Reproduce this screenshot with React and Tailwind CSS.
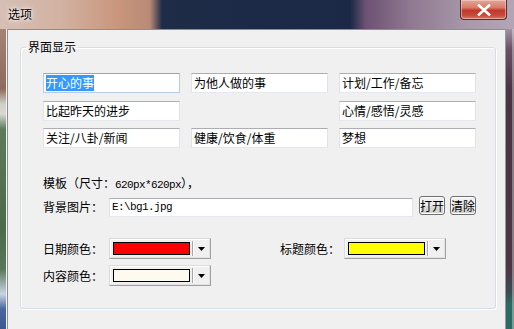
import React from "react";

function Field({ children, focused }) {
  return (
    <div
      className={`h-[20px] w-[137px] bg-white border flex items-center pl-[2px] leading-[16px] ${
        focused
          ? "border-[#b8cde3] border-t-[#8ea6c2]"
          : "border-[#e2e3ea] border-t-[#abadb3] border-b-[#e3e9ef]"
      }`}
    >
      {children}
    </div>
  );
}

function ColorCombo({ color }) {
  return (
    <div className="h-[21px] w-[102px] flex items-center border border-[#dcdcdc] border-b-[#a0a0a0] border-r-[#a0a0a0] bg-[#f0f0f0] shadow-[inset_-1px_-1px_0_#e3e3e3,inset_1px_1px_0_#ffffff]">
      <div className={`ml-[3px] h-[13px] w-[77px] border border-black ${color}`} />
      <div className="ml-[2px] h-[15px] w-[1px] bg-[#a8a8a8] shadow-[1px_0_0_#ffffff]" />
      <svg width="14" height="13" viewBox="0 0 14 13" className="ml-[1px]">
        <path d="M4 5 H11 L7.5 9 Z" fill="#000" />
      </svg>
    </div>
  );
}

function WinButton({ children }) {
  return (
    <button className="h-[19px] w-[26px] rounded-[3px] border border-[#707070] bg-[linear-gradient(to_bottom,#f2f2f2_0%,#ebebeb_50%,#dddddd_51%,#cfcfcf_100%)] leading-[15px] text-[12px] text-black flex items-center justify-center shadow-[inset_0_0_0_1px_#fcfcfc]">
      {children}
    </button>
  );
}

export default function App() {
  return (
    <div className="w-[514px] h-[329px] overflow-hidden flex flex-col font-['Noto_Sans_CJK_SC',sans-serif] text-[12px] text-black">
      {/* title bar */}
      <div className="h-[29px] flex items-start bg-[linear-gradient(to_right,#d6bfb6_0px,#d2b2a2_60px,#c8957b_120px,#b88a76_150px,#1f2c48_162px,#1b2846_350px,#6d5274_366px,#8f7890_410px,#a99aab_470px,#b2a6b6_514px)]">
        <div className="pl-[8px] pt-[7px] leading-[14px] [text-shadow:0_0_6px_#ffffff,0_0_3px_#ffffff]">选项</div>
        <div className="flex-1" />
        <div className="mr-[7px] h-[20px] w-[47px] rounded-b-[4px] border border-t-0 border-[#5b2d2d] bg-[linear-gradient(to_bottom,#e0a89c_0%,#d87a68_40%,#c3382a_55%,#c54a3c_80%,#d4786a_100%)] flex items-center justify-center shadow-[inset_0_0_0_1px_rgba(255,220,210,0.5)]">
          <svg width="14" height="12" viewBox="0 0 14 12">
            <path d="M2 1.5 L12 10.5 M12 1.5 L2 10.5" stroke="#ffffff" strokeWidth="2.6" strokeLinecap="square" />
          </svg>
        </div>
      </div>

      <div className="flex flex-1">
        {/* left frame */}
        <div className="w-[7px] bg-[linear-gradient(to_bottom,#a58272_0px,#8e6a5c_60px,#cfd0c8_75px,#d8dad2_85px,#5e7a5c_100px,#4b6a4a_200px,#56775a_240px,#c8d4e0_265px,#4a66a0_280px,#3b5690_300px)] border-r border-[#f4f4f4]" />

        {/* client area */}
        <div className="flex-1 bg-[#f0f0f0] border-t border-l border-[#8d8d8d]">
          <fieldset className="ml-[12px] mt-[9px] w-[476px] h-[270px] border border-[#d5dfe5] rounded-[3px] shadow-[inset_1px_1px_0_#ffffff,1px_1px_0_#ffffff]">
            <legend className="ml-[5px] px-[2px] leading-[16px]">界面显示</legend>

            <div className="pl-[22px] pt-[18px]">
              <div className="grid grid-cols-[137px_137px_137px] gap-x-[11px]">
                <Field focused>
                  <span className="bg-[#3399ff] text-white">开心的事</span>
                </Field>
                <Field>为他人做的事</Field>
                <Field>计划/工作/备忘</Field>
              </div>
              <div className="mt-[8px] grid grid-cols-[137px_137px_137px] gap-x-[11px]">
                <Field>比起昨天的进步</Field>
                <div />
                <Field>心情/感悟/灵感</Field>
              </div>
              <div className="mt-[7px] grid grid-cols-[137px_137px_137px] gap-x-[11px]">
                <Field>关注/八卦/新闻</Field>
                <Field>健康/饮食/体重</Field>
                <Field>梦想</Field>
              </div>

              <div className="mt-[27px] leading-[16px]">
                模板（尺寸：<span className="font-['Liberation_Mono',monospace] text-[11px] tracking-[-0.6px]">620px*620px</span>），
              </div>

              <div className="mt-[3px] flex items-start">
                <div className="w-[66px] pt-[3px] leading-[16px]">背景图片：</div>
                <div className="mt-[2px] h-[19px] w-[304px] bg-white border border-[#e2e3ea] border-t-[#abadb3] border-b-[#e3e9ef] flex items-center pl-[2px] font-['Liberation_Mono',monospace] text-[11px] tracking-[-0.6px]">
                  E:\bg1.jpg
                </div>
                <div className="ml-[6px]">
                  <WinButton>打开</WinButton>
                </div>
                <div className="ml-[5px]">
                  <WinButton>清除</WinButton>
                </div>
              </div>

              <div className="mt-[21px] flex items-center">
                <div className="w-[66px] leading-[16px]">日期颜色：</div>
                <ColorCombo color="bg-[#ff0000]" />
                <div className="ml-[69px] w-[64px] leading-[16px]">标题颜色：</div>
                <ColorCombo color="bg-[#ffff00]" />
              </div>

              <div className="mt-[6px] flex items-center">
                <div className="w-[66px] leading-[16px]">内容颜色：</div>
                <ColorCombo color="bg-[#fffaf0]" />
              </div>
            </div>
          </fieldset>
        </div>

        {/* right frame */}
        <div className="w-[9px] border-l border-[#9a9a9a] bg-[linear-gradient(to_bottom,#a292a6_0px,#6a5064_20px,#4a3442_60px,#4d3644_240px,#3e4a52_262px,#2a6a62_275px,#2b6b63_300px)] shadow-[inset_-2px_0_0_rgba(255,255,255,0.35)]" />
      </div>
    </div>
  );
}
